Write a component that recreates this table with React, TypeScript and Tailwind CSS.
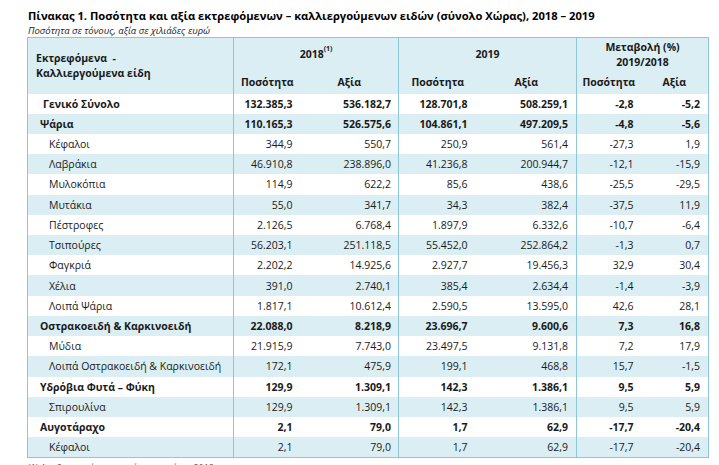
import React from "react";

type Row = { label: string; kind: "total" | "group" | "sub"; v: string[] };

const rows: Row[] = [
  { label: "Γενικό Σύνολο", kind: "total", v: ["132.385,3", "536.182,7", "128.701,8", "508.259,1", "-2,8", "-5,2"] },
  { label: "Ψάρια", kind: "group", v: ["110.165,3", "526.575,6", "104.861,1", "497.209,5", "-4,8", "-5,6"] },
  { label: "Κέφαλοι", kind: "sub", v: ["344,9", "550,7", "250,9", "561,4", "-27,3", "1,9"] },
  { label: "Λαβράκια", kind: "sub", v: ["46.910,8", "238.896,0", "41.236,8", "200.944,7", "-12,1", "-15,9"] },
  { label: "Μυλοκόπια", kind: "sub", v: ["114,9", "622,2", "85,6", "438,6", "-25,5", "-29,5"] },
  { label: "Μυτάκια", kind: "sub", v: ["55,0", "341,7", "34,3", "382,4", "-37,5", "11,9"] },
  { label: "Πέστροφες", kind: "sub", v: ["2.126,5", "6.768,4", "1.897,9", "6.332,6", "-10,7", "-6,4"] },
  { label: "Τσιπούρες", kind: "sub", v: ["56.203,1", "251.118,5", "55.452,0", "252.864,2", "-1,3", "0,7"] },
  { label: "Φαγκριά", kind: "sub", v: ["2.202,2", "14.925,6", "2.927,7", "19.456,3", "32,9", "30,4"] },
  { label: "Χέλια", kind: "sub", v: ["391,0", "2.740,1", "385,4", "2.634,4", "-1,4", "-3,9"] },
  { label: "Λοιπά Ψάρια", kind: "sub", v: ["1.817,1", "10.612,4", "2.590,5", "13.595,0", "42,6", "28,1"] },
  { label: "Οστρακοειδή & Καρκινοειδή", kind: "group", v: ["22.088,0", "8.218,9", "23.696,7", "9.600,6", "7,3", "16,8"] },
  { label: "Μύδια", kind: "sub", v: ["21.915,9", "7.743,0", "23.497,5", "9.131,8", "7,2", "17,9"] },
  { label: "Λοιπά Οστρακοειδή & Καρκινοειδή", kind: "sub", v: ["172,1", "475,9", "199,1", "468,8", "15,7", "-1,5"] },
  { label: "Υδρόβια Φυτά – Φύκη", kind: "group", v: ["129,9", "1.309,1", "142,3", "1.386,1", "9,5", "5,9"] },
  { label: "Σπιρουλίνα", kind: "sub", v: ["129,9", "1.309,1", "142,3", "1.386,1", "9,5", "5,9"] },
  { label: "Αυγοτάραχο", kind: "group", v: ["2,1", "79,0", "1,7", "62,9", "-17,7", "-20,4"] },
  { label: "Κέφαλοι", kind: "sub", v: ["2,1", "79,0", "1,7", "62,9", "-17,7", "-20,4"] },
];

const valPad = ["pr-[8px]", "pr-[7px]", "pr-[9px]", "pr-[8px]", "pr-[7px]", "pr-[8px]"];

export default function App() {
  return (
    <div
      className="w-[719px] h-[465px] overflow-hidden bg-white text-[#1a1a1a]"
      style={{ fontFamily: '"Open Sans", "Noto Sans", sans-serif' }}
    >
      <div className="pl-[28px] pt-[8px]">
        <div className="text-[11.2px] font-bold leading-[16px] text-black">
          Πίνακας 1. Ποσότητα και αξία εκτρεφόμενων – καλλιεργούμενων ειδών (σύνολο Χώρας), 2018 – 2019
        </div>
        <div className="text-[9.5px] italic leading-[13px] text-[#222]">
          Ποσότητα σε τόνους, αξία σε χιλιάδες ευρώ
        </div>
      </div>
      <table className="ml-[27px] w-[681px] table-fixed border-collapse border border-[#8DC6D6] text-[10.5px]">
        <colgroup>
          <col className="w-[206px]" />
          <col className="w-[67px]" />
          <col className="w-[98px]" />
          <col className="w-[78px]" />
          <col className="w-[100px]" />
          <col className="w-[64px]" />
          <col className="w-[68px]" />
        </colgroup>
        <thead className="bg-[#DAEEF3] font-bold">
          <tr className="h-[35px]">
            <th rowSpan={2} className="border-r border-[#8DC6D6] pl-[8px] text-left align-middle font-bold leading-[15px]">
              Εκτρεφόμενα&nbsp; -<br />Καλλιεργούμενα είδη
            </th>
            <th colSpan={2} className="border-r border-[#8DC6D6] text-center font-bold">
              2018<sup className="text-[7px] align-[4px]">(1)</sup>
            </th>
            <th colSpan={2} className="border-r border-[#8DC6D6] text-center font-bold">
              2019
            </th>
            <th colSpan={2} className="text-center font-bold leading-[15px]">
              Μεταβολή (%)<br />2019/2018
            </th>
          </tr>
          <tr className="h-[21px]">
            <th className="text-center font-bold">Ποσότητα</th>
            <th className="border-r border-[#8DC6D6] text-center font-bold">Αξία</th>
            <th className="text-center font-bold">Ποσότητα</th>
            <th className="border-r border-[#8DC6D6] text-center font-bold">Αξία</th>
            <th className="text-center font-bold">Ποσότητα</th>
            <th className="text-center font-bold">Αξία</th>
          </tr>
        </thead>
        <tbody>
          {rows.map((r, i) => {
            const bold = r.kind !== "sub";
            const pad = r.kind === "total" ? "pl-[15px]" : r.kind === "group" ? "pl-[12px]" : "pl-[21px]";
            return (
              <tr key={i} className={`h-[20.22px] ${i % 2 === 1 ? "bg-[#DAEEF3]" : "bg-white"} ${bold ? "font-bold" : ""}`}>
                <td className={`border-r border-[#8DC6D6] ${pad} whitespace-nowrap leading-[14px]`}>{r.label}</td>
                {r.v.map((x, j) => (
                  <td
                    key={j}
                    className={`text-right ${valPad[j]} leading-[14px] ${j === 1 || j === 3 ? "border-r border-[#8DC6D6]" : ""}`}
                  >
                    {x}
                  </td>
                ))}
              </tr>
            );
          })}
        </tbody>
      </table>
      <div className="pl-[28px] pt-[4px] text-[9px] leading-[12px] text-[#555]">
        (1) Αναθεωρημένα στοιχεία για το έτος 2018
      </div>
    </div>
  );
}
